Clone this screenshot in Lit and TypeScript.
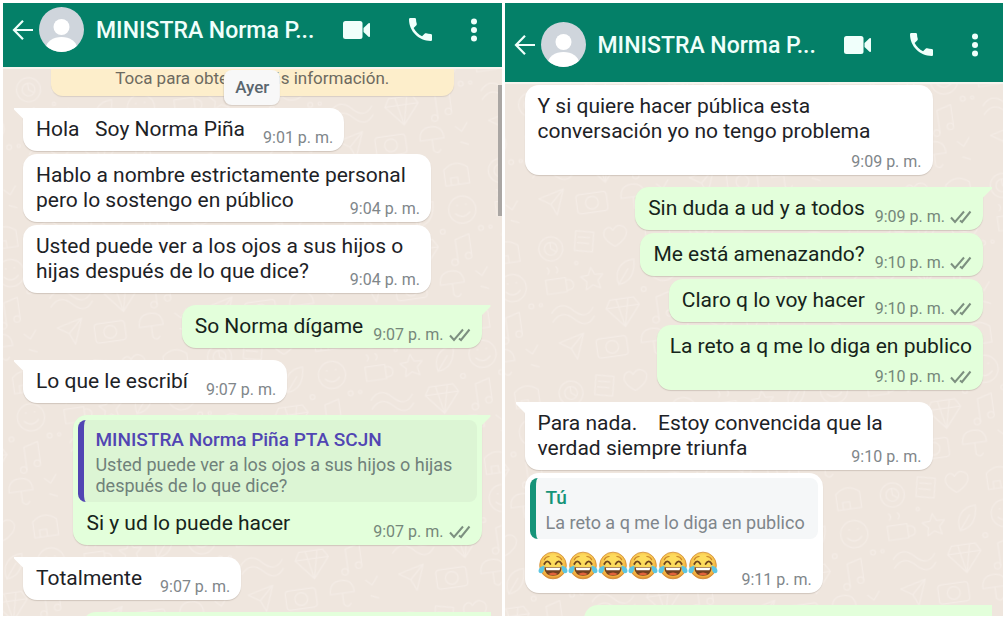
import { LitElement, html, css, svg, nothing } from "lit";
import { customElement, property } from "lit/decorators.js";
import { classMap } from "lit/directives/class-map.js";

interface Quote {
  author: string;
  text: string;
  own?: boolean;
}

interface Message {
  text?: string;
  laughs?: number;
  time: string;
  sent?: boolean;
  first?: boolean;
  stacked?: boolean;
  quote?: Quote;
}

const leftMessages: Message[] = [
  { text: "Hola   Soy Norma Piña", time: "9:01 p. m.", first: true },
  { text: "Hablo a nombre estrictamente personal\npero lo sostengo en público", time: "9:04 p. m." },
  { text: "Usted puede ver a los ojos a sus hijos o\nhijas después de lo que dice?", time: "9:04 p. m." },
  { text: "So Norma dígame", time: "9:07 p. m.", sent: true, first: true },
  { text: "Lo que le escribí", time: "9:07 p. m.", first: true },
  {
    text: "Si y ud lo puede hacer",
    time: "9:07 p. m.",
    sent: true,
    first: true,
    quote: {
      author: "MINISTRA Norma Piña PTA SCJN",
      text: "Usted puede ver a los ojos a sus hijos o hijas\ndespués de lo que dice?",
    },
  },
  { text: "Totalmente", time: "9:07 p. m.", first: true },
];

const rightMessages: Message[] = [
  { text: "Y si quiere hacer pública esta\nconversación yo no tengo problema", time: "9:09 p. m.", stacked: true },
  { text: "Sin duda a ud y a todos", time: "9:09 p. m.", sent: true, first: true },
  { text: "Me está amenazando?", time: "9:10 p. m.", sent: true },
  { text: "Claro q lo voy hacer", time: "9:10 p. m.", sent: true },
  { text: "La reto a q me lo diga en publico", time: "9:10 p. m.", sent: true, stacked: true },
  { text: "Para nada.    Estoy convencida que la\nverdad siempre triunfa", time: "9:10 p. m.", first: true },
  {
    laughs: 6,
    time: "9:11 p. m.",
    quote: { author: "Tú", text: "La reto a q me lo diga en publico", own: true },
  },
];

const ticks = html`<svg class="ticks" width="22" height="14" viewBox="0 0 22 14" aria-label="Entregado">
  <path d="M1 7.5 5 12 14 1.5M10 10.5 12 12 20.5 1.5" fill="none" stroke="#7d9080" stroke-width="2" />
</svg>`;

const laugh = html`<svg class="laugh" width="30" height="31" viewBox="0 0 31 31" role="img" aria-label="Cara llorando de risa">
  <defs>
    <radialGradient id="face" cx="50%" cy="38%" r="62%">
      <stop offset="0.4" stop-color="#fddc5e" />
      <stop offset="0.85" stop-color="#f3b040" />
      <stop offset="1" stop-color="#d98532" />
    </radialGradient>
  </defs>
  <circle cx="15.5" cy="15.5" r="13.8" fill="url(#face)" stroke="#cf8a35" stroke-width="0.8" />
  <path d="M6.5 9.5Q8 6.5 11.5 6.2M24.5 9.5Q23 6.5 19.5 6.2" fill="none" stroke="#c9822c" stroke-width="1.2" stroke-linecap="round" />
  <path d="M6.5 14Q9.5 8.5 12.8 14M18.2 14Q21.5 8.5 24.5 14" fill="none" stroke="#6e431f" stroke-width="1.9" stroke-linecap="round" />
  <path d="M6.5 17.3H24.5Q24 26 15.5 26T6.5 17.3Z" fill="#70401f" />
  <path d="M8 17.8H23L22.3 20.5H8.7Z" fill="#fff" />
  <path d="M10.5 24.3Q15.5 21 20.5 24.3Q15.5 27 10.5 24.3Z" fill="#e3623c" />
  <path d="M6.8 15.5Q1 17 .6 20.5T4 23.5Q6.5 22 6.8 15.5ZM24.2 15.5Q30 17 30.4 20.5T27 23.5Q24.5 22 24.2 15.5Z" fill="#5cc6e3" />
</svg>`;

@customElement("chat-bubble")
class ChatBubble extends LitElement {
  @property({ attribute: false }) message!: Message;

  static styles = css`
    :host {
      display: flex;
      flex-direction: column;
    }
    .bubble {
      position: relative;
      box-sizing: border-box;
      align-self: flex-start;
      max-width: 89%;
      border-radius: 14px;
      background: #fff;
      color: #1d2226;
      box-shadow: 0 1px 1px rgba(90, 75, 60, 0.2);
    }
    .sent {
      align-self: flex-end;
      background: #e3ffdb;
      color: #16241a;
    }
    .first {
      border-top-left-radius: 0;
    }
    .first.sent {
      border-top-left-radius: 14px;
      border-top-right-radius: 0;
    }
    .first::before {
      content: "";
      position: absolute;
      top: 0;
      left: -9px;
      width: 10px;
      height: 13px;
      background: inherit;
      clip-path: polygon(0 0, 100% 0, 100% 100%, 90% 80%, 0 12%);
    }
    .first.sent::before {
      left: auto;
      right: -9px;
      clip-path: polygon(0 0, 100% 0, 100% 12%, 10% 80%, 0 100%);
    }
    .body {
      padding: 9px 11px 9px 13px;
      font-size: 21px;
      line-height: 25px;
    }
    .line {
      white-space: pre;
    }
    .last {
      display: flex;
      align-items: flex-end;
      justify-content: space-between;
      gap: 18px;
    }
    .sent .last {
      gap: 10px;
    }
    .time {
      display: flex;
      align-items: center;
      gap: 5px;
      margin: 0 0 -6px auto;
      font-size: 16px;
      line-height: 20px;
      white-space: nowrap;
      color: #80868a;
    }
    .sent .time {
      color: #75877a;
    }
    .stacked .last {
      padding-top: 8px;
    }
    .wide {
      width: 89%;
    }
    .laughs {
      display: flex;
      padding: 2px 0 3px;
    }
    .quote {
      display: block;
      margin: 5px 5px 0;
      padding: 9px 13px 6px 11px;
      border-left: 6px solid #5145b3;
      border-radius: 8px;
      background: #dcf5d4;
      font-size: 18px;
      line-height: 21px;
      white-space: pre-wrap;
      color: #70817a;
    }
    .quote.own {
      padding-left: 10px;
      border-left-color: #159479;
      background: #f5f7f8;
      color: #7f868b;
    }
    .author {
      display: block;
      padding-bottom: 4px;
      font-size: 19px;
      font-style: normal;
      font-weight: 500;
      color: #5145b3;
    }
    .own .author {
      color: #159479;
    }
  `;

  render() {
    const m = this.message;
    const lines = m.text ? m.text.split("\n") : [];
    const last = m.stacked ? undefined : lines.pop();
    const shape = {
      bubble: true,
      sent: !!m.sent,
      first: !!m.first,
      stacked: !!m.stacked,
      wide: !!m.text && (m.text.includes("\n") || !!m.quote),
    };
    return html`<article class=${classMap(shape)}>
      ${m.quote
        ? html`<blockquote class=${classMap({ quote: true, own: !!m.quote.own })}><cite class="author">${m.quote.author}</cite>${m.quote.text}</blockquote>`
        : nothing}
      <div class="body">
        ${lines.map((line) => html`<div class="line">${line}</div>`)}
        <div class="last">
          ${last ? html`<span class="line">${last}</span>` : nothing}
          ${m.laughs ? html`<div class="laughs">${Array.from({ length: m.laughs }, () => laugh)}</div>` : nothing}
          <div class="time"><time>${m.time}</time>${m.sent ? ticks : nothing}</div>
        </div>
      </div>
    </article>`;
  }
}

const doodles = svg`
  <g fill="none" stroke="#f4ece6" stroke-width="1.5" stroke-linecap="round" stroke-linejoin="round">
    <circle cx="28" cy="30" r="15" /><circle cx="28" cy="30" r="8" /><path d="M28 22v8l5 4" />
    <path d="M62 12l22 5-5 24-22-5zM64 20l14 3M62 27l14 3" />
    <path d="M108 18c7-10 20-3 16 7-3 8-16 13-16 13s-11-8-12-15c0-9 9-13 12-5z" />
    <path d="M148 20q15-13 30 0v20h-30zM155 40v-9h9v9" />
    <path d="M16 68h25v18H16zM41 71q9 0 9 7t-9 6M20 61q4-4 0-8M31 61q4-4 0-8" />
    <path d="M74 60l4 9 10 1-7 7 2 10-9-5-9 5 2-10-7-7 10-1z" />
    <path d="M106 86c-4-18 7-29 23-29-1 18-9 28-23 29zM106 86l14-18" />
    <circle cx="164" cy="72" r="17" /><path d="M155 76q9 9 18 0M158 66h1M169 66h1" />
    <path d="M18 110q13-15 27 0t25 0M18 121q13-15 27 0t25 0" />
    <path d="M92 104h30l6 10-21 25-21-25zM86 114h42M100 104l7 35 8-35" />
    <path d="M150 108v28M150 108l18-5v27" /><circle cx="146" cy="136" r="4" /><circle cx="164" cy="130" r="4" />
    <path d="M22 148l32-8-12 31-6-14zM36 157l18-17" />
    <rect x="68" y="150" width="38" height="24" rx="4" /><circle cx="87" cy="162" r="8" />
    <path d="M124 162q0-16 15-16t15 16zM139 162v14q5 6 9 0M170 150l7 7 8-10M174 170l9 4" />
    <circle cx="6" cy="98" r="2" /><circle cx="136" cy="96" r="3" /><circle cx="57" cy="52" r="2" /><circle cx="184" cy="98" r="3" />
  </g>`;

@customElement("chat-screen")
class ChatScreen extends LitElement {
  @property({ attribute: false }) messages: Message[] = [];
  @property({ type: Boolean, reflect: true }) dated = false;

  static styles = css`
    :host {
      display: flex;
      flex-direction: column;
      min-width: 0;
      overflow: hidden;
      background: #efe6de;
    }
    .bar {
      display: flex;
      align-items: center;
      padding: 19px 25px 15px 9px;
      background: #048068;
      color: #f0fffb;
    }
    :host([dated]) .bar {
      padding-top: 4px;
    }
    .action {
      display: flex;
      flex: none;
      margin: 0;
      padding: 0;
      border: 0;
      background: none;
      color: inherit;
    }
    .avatar {
      flex: none;
      margin: 0 12px 0 5px;
    }
    .name {
      flex: 1;
      margin: 0;
      padding-top: 2px;
      overflow: hidden;
      font-size: 23px;
      font-weight: 500;
      line-height: 30px;
      white-space: nowrap;
    }
    .actions {
      display: flex;
      align-items: center;
      gap: 39px;
    }
    .chat {
      position: relative;
      flex: 1;
      min-height: 0;
      overflow: hidden;
      border-top: 2px solid #f6f4ee;
    }
    .wallpaper {
      position: absolute;
      inset: 0;
      width: 100%;
      height: 100%;
    }
    .list {
      position: relative;
      display: flex;
      flex-direction: column;
      gap: 3px;
      padding: 1px 20px 0;
    }
    :host([dated]) .list {
      padding-top: 0;
    }
    .gap {
      margin-top: 9px;
    }
    .notice {
      margin: 0 28px;
      padding-bottom: 9px;
      border-radius: 0 0 12px 12px;
      background: #fdeecb;
      box-shadow: 0 1px 1px rgba(90, 75, 60, 0.15);
      font-size: 17px;
      line-height: 18px;
      text-align: center;
      color: #6d6a5f;
    }
    .day {
      position: absolute;
      top: 1px;
      left: 50%;
      transform: translateX(-50%);
      padding: 7px 11px;
      border-radius: 8px;
      background: #f8f8f8;
      box-shadow: 0 1px 1px rgba(90, 75, 60, 0.15);
      font-size: 17px;
      font-weight: 500;
      line-height: 21px;
      color: #5a666e;
    }
    .scroll {
      position: absolute;
      top: 16px;
      right: 0;
      width: 4px;
      height: 131px;
      background: #aaa6a3;
    }
    .next {
      box-sizing: border-box;
      align-self: flex-end;
      width: 89%;
      height: 40px;
      margin-right: -9px;
      border-radius: 14px 0 0 0;
      background: #e3ffdb;
    }
  `;

  render() {
    const id = this.dated ? "wall-a" : "wall-b";
    return html`
      <header class="bar">
        <button class="action" aria-label="Atrás">
          <svg width="22" height="22" viewBox="0 0 22 22" fill="none" stroke="currentColor" stroke-width="2.2">
            <path d="M21 11H2.5M11 1.8 2 11l9 9.2" />
          </svg>
        </button>
        <svg class="avatar" width="45" height="45" viewBox="0 0 45 45" aria-hidden="true">
          <clipPath id="round"><circle cx="22.5" cy="22.5" r="22.5" /></clipPath>
          <g clip-path="url(#round)">
            <rect width="45" height="45" fill="#cfd5dc" />
            <circle cx="22.5" cy="20" r="8" fill="#fff" />
            <ellipse cx="22.5" cy="41" rx="15.5" ry="11" fill="#fff" />
          </g>
        </svg>
        <h1 class="name">MINISTRA Norma P...</h1>
        <div class="actions">
          <button class="action" aria-label="Videollamada">
            <svg width="27" height="18" viewBox="0 0 27 18" fill="currentColor">
              <rect width="19.5" height="18" rx="2.5" />
              <path d="M20.5 7 25.500 2.300Q27 1.400 27 3v12q0 1.600-1.500.7L20.500 11Z" />
            </svg>
          </button>
          <button class="action" aria-label="Llamar">
            <svg width="23" height="23" viewBox="3 3 18 18" fill="currentColor">
              <path d="M6.620 10.790c1.440 2.830 3.760 5.140 6.590 6.590l2.200-2.200c.27-.27.67-.36 1.020-.24 1.120.37 2.330.57 3.570.57.55 0 1 .45 1 1V20c0 .55-.45 1-1 1-9.390 0-17-7.610-17-17 0-.55.45-1 1-1h3.500c.55 0 1 .45 1 1 0 1.250.2 2.450.57 3.570.11.35.03.74-.25 1.020l-2.200 2.200z" />
            </svg>
          </button>
          <button class="action" aria-label="Más opciones">
            <svg width="6" height="24" viewBox="0 0 6 24" fill="currentColor">
              <circle cx="3" cy="3.5" r="3" /><circle cx="3" cy="12" r="3" /><circle cx="3" cy="20.5" r="3" />
            </svg>
          </button>
        </div>
      </header>
      <main class="chat">
        <svg class="wallpaper" aria-hidden="true">
          <defs><pattern id=${id} width="190" height="182" patternUnits="userSpaceOnUse" patternTransform="rotate(-8) scale(0.8)">${doodles}</pattern></defs>
          <rect width="100%" height="100%" fill="url(#${id})" />
        </svg>
        <div class="list">
          ${this.dated ? html`<div class="notice">Toca para obtener más información.</div>` : nothing}
          ${this.messages.map(
            (m) => html`<chat-bubble class=${classMap({ gap: !!m.first })} .message=${m}></chat-bubble>`
          )}
          <div class="next gap"></div>
        </div>
        ${this.dated ? html`<div class="day">Ayer</div><div class="scroll"></div>` : nothing}
      </main>
    `;
  }
}

@customElement("app-root")
class AppRoot extends LitElement {
  static styles = css`
    :host {
      box-sizing: border-box;
      display: grid;
      grid-template-columns: 1fr 1fr;
      gap: 3px;
      height: 100vh;
      padding: 3px 3px 4px;
      background: #fff;
      font-family: Roboto, "Liberation Sans", sans-serif;
    }
  `;

  render() {
    return html`
      <chat-screen dated .messages=${leftMessages}></chat-screen>
      <chat-screen .messages=${rightMessages}></chat-screen>
    `;
  }
}
